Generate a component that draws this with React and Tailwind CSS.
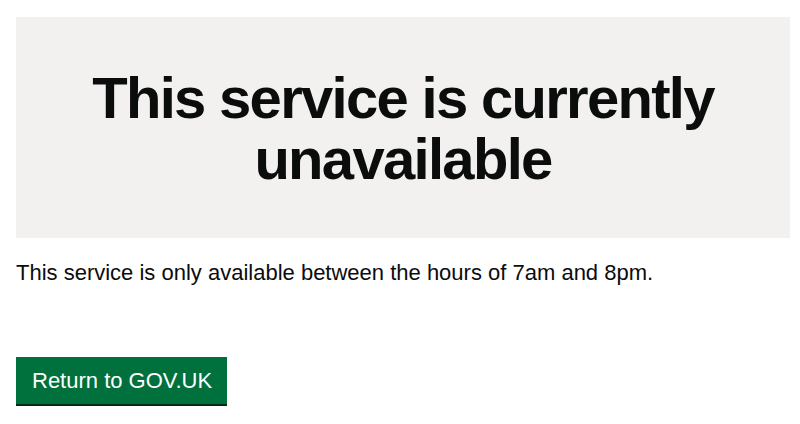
export default function App() {
  return (
    <div className="w-[800px] h-[424px] bg-white" style={{ fontFamily: '"Liberation Sans", Arial, sans-serif' }}>
      <div className="px-4 pt-[17px]">
        <div className="bg-[#f2f1f0] h-[221px] mr-[-6px] flex items-center justify-center">
          <h1 className="text-[58px] leading-[61px] font-bold text-[#0b0c0c] text-center tracking-[-1.7px]">
            This service is currently
            <br />
            unavailable
          </h1>
        </div>
        <p className="mt-[20px] text-[22px] leading-[30px] text-[#0b0c0c]">
          This service is only available between the hours of 7am and 8pm.
        </p>
        <div className="mt-[69px]">
          <button className="bg-[#00703c] text-white text-[22px] leading-[26px] h-[47px] pl-4 pr-[15px] shadow-[0_2px_0_#002d18] flex items-center">
            Return to GOV.UK
          </button>
        </div>
      </div>
    </div>
  );
}
